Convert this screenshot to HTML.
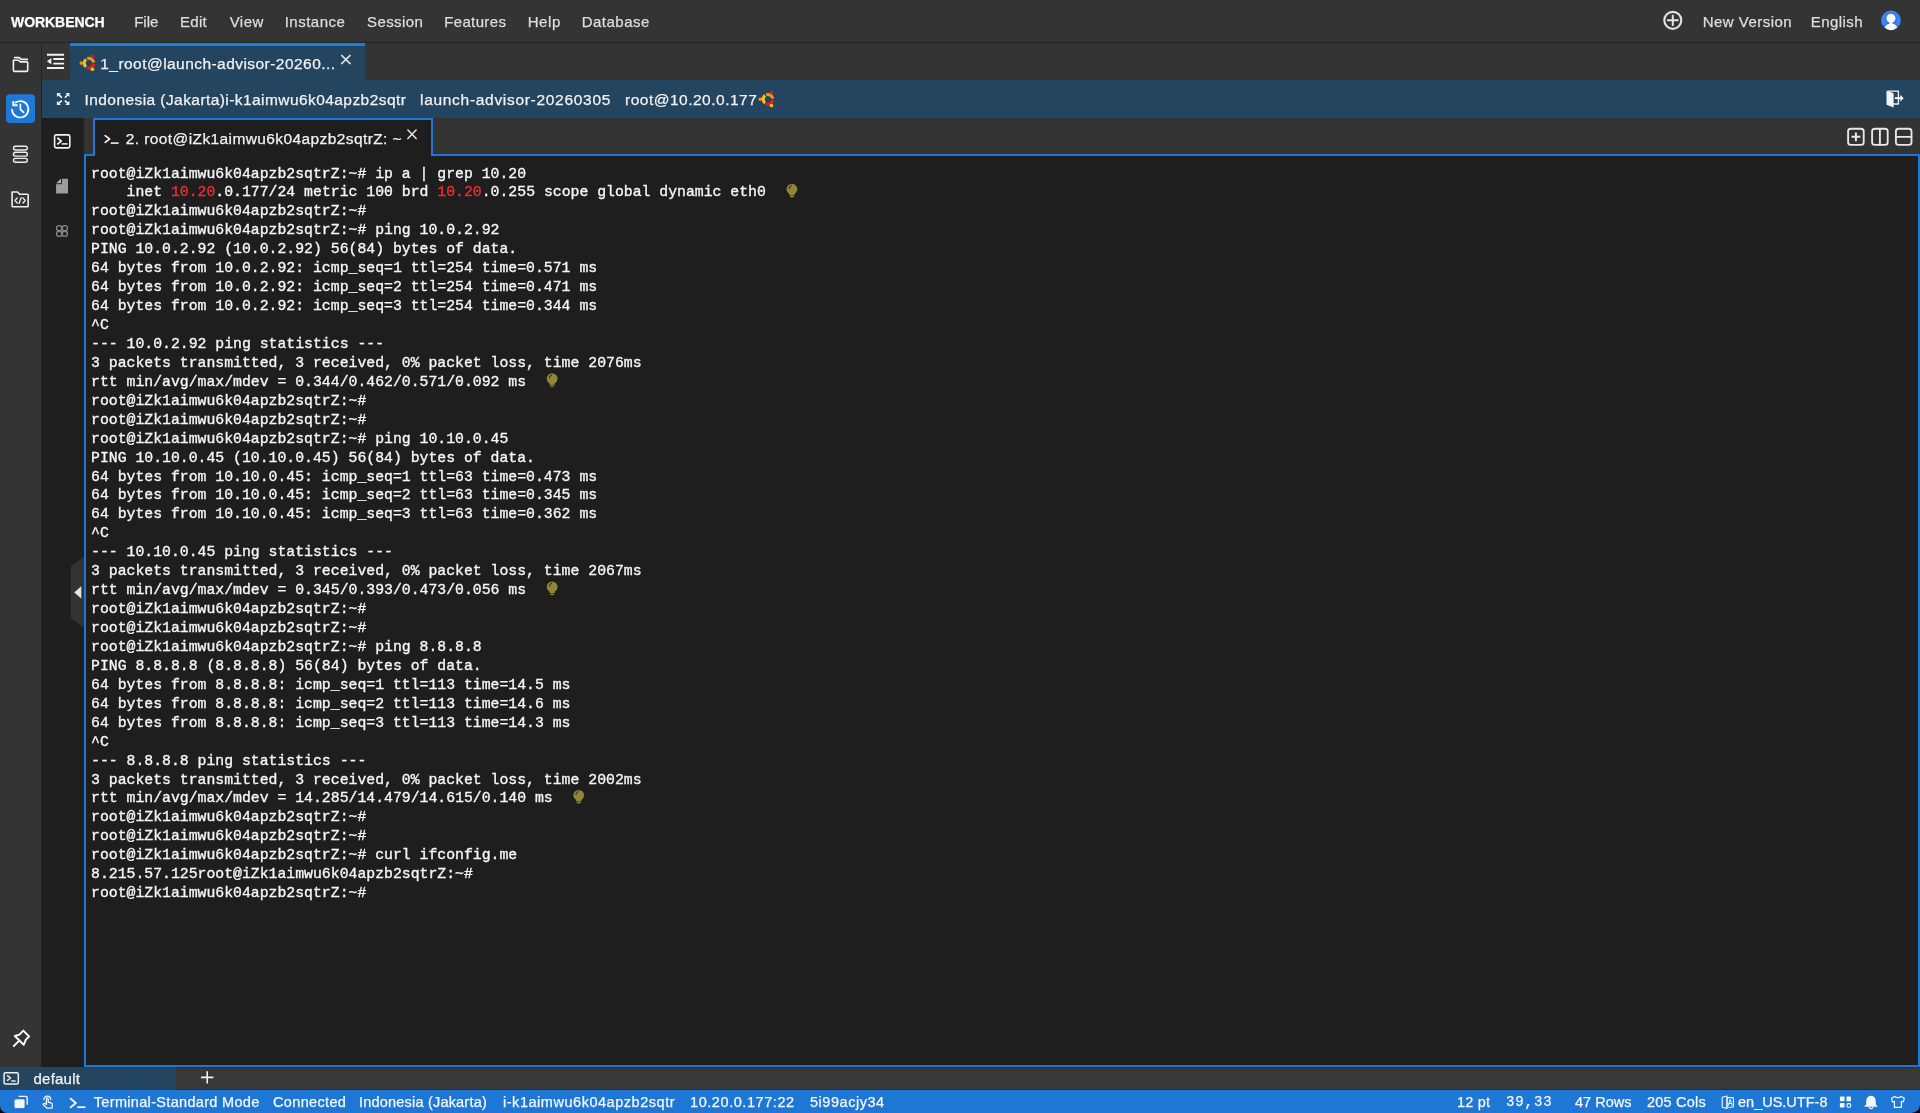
<!DOCTYPE html>
<html><head><meta charset="utf-8">
<style>
*{margin:0;padding:0;box-sizing:border-box}
html,body{width:1920px;height:1113px;overflow:hidden;background:#000}
body{position:relative;font-family:"Liberation Sans",sans-serif;color:#efefef}
.a{position:absolute}
#root{position:absolute;left:0;top:0;width:1920px;height:1113px;will-change:transform;overflow:hidden}
.t{position:absolute;white-space:pre;line-height:1;-webkit-text-stroke:0.25px currentColor}
#menubar{left:0;top:0;width:1920px;height:43px;background:#343434;border-bottom:1px solid #232323}
#side1{left:0;top:43px;width:42px;height:1024px;background:#343434;border-right:1px solid #252525}
#tabrow{left:42px;top:43px;width:1878px;height:37px;background:#343434}
#tab1{left:70px;top:43px;width:295px;height:37px;background:#24455f;border-top:3px solid #1a7fe0}
#info{left:42px;top:80px;width:1878px;height:38px;background:#24455f}
#side2{left:42px;top:118px;width:42px;height:949px;background:#1f1f1f}
#strip{left:84px;top:118px;width:1836px;height:37px;background:#333}
#term{left:84px;top:154px;width:1836px;height:913px;background:#1e1e1e;border:2px solid #1a78d8}
#ttab{left:93px;top:118px;width:340px;height:38px;background:#1e1e1e;border:2px solid #1a78d8;border-bottom:none}
#sess{left:0;top:1067px;width:1920px;height:23px;background:#383838;border-top:1px solid #2c2a22;border-bottom:1px solid #2e2c24}
#deftab{left:0;top:1066.5px;width:176px;height:23.5px;background:#24455f}
#status{left:0;top:1090px;width:1920px;height:23px;background:#1f77d5;border-radius:0 0 8.5px 7px}
.mono{font-family:"Liberation Mono",monospace}
#lines{left:91px;top:164.5px;font-size:14.8px;line-height:18.94px;color:#f6f6f6;white-space:pre;-webkit-text-stroke:0.35px #f6f6f6}
.r{-webkit-text-stroke:0.35px #e8302e}
.r{color:#e8302e}
.mi{top:13.6px;font-size:15px;color:#dedede}
.wt{color:#f2f2f2}
.st{top:1094.7px;font-size:14.5px;color:#f4f8fc}
</style></head><body><div id="root">
<div id="menubar" class="a"></div>
<div id="side1" class="a"></div>
<div id="tabrow" class="a"></div>
<div id="tab1" class="a"></div>
<div id="info" class="a"></div>
<div id="side2" class="a"></div>
<div id="strip" class="a"></div>
<div id="term" class="a"></div>
<div id="ttab" class="a"></div>
<div id="sess" class="a"></div>
<div id="deftab" class="a"></div>
<div id="status" class="a"></div>


<!-- ICONS -->
<svg class="a" style="left:0;top:0" width="1920" height="1113" viewBox="0 0 1920 1113" fill="none" stroke-linecap="round" stroke-linejoin="round">
 <!-- left sidebar: folder -->
 <g stroke="#f0f0f0" stroke-width="1.6">
  <path d="M14.5 57.6 H19.3 L21.3 59.4 H27.4"/>
  <path d="M13.4 60.2 V70.3 Q13.4 71.4 14.5 71.4 H26.6 Q27.7 71.4 27.7 70.3 V62.6 Q27.7 61.9 27 61.9 H20.3 L18.6 60.2 Z"/>
 </g>
 <!-- history button -->
 <rect x="6" y="94.3" width="29" height="28.7" rx="4" fill="#1f78d6"/>
 <g stroke="#fff" stroke-width="1.7">
  <path d="M15.6 102.5 A8.2 8.2 0 1 1 12 109.6"/>
  <path d="M13.3 101 V105.3 H17.6" stroke-linejoin="miter" stroke-linecap="butt" stroke-width="1.9"/>
  <path d="M20.4 104.3 V109.3 L23.6 112.4"/>
 </g>
 <!-- db list -->
 <g stroke="#eeeeee" stroke-width="1.4">
  <rect x="13.5" y="146.2" width="13.8" height="3.8" rx="1.9"/>
  <rect x="13.5" y="152.3" width="13.8" height="3.8" rx="1.9"/>
  <rect x="13.5" y="158.4" width="13.8" height="3.8" rx="1.9"/>
 </g>
 <g fill="#8a8a8a"><circle cx="15.9" cy="148.1" r="0.6"/><circle cx="15.9" cy="154.2" r="0.6"/><circle cx="15.9" cy="160.3" r="0.6"/></g>
 <!-- code folder -->
 <g stroke="#eeeeee" stroke-width="1.6">
  <path d="M12.1 192 H17.6 L19.6 194.3 H27.3 Q28.2 194.3 28.2 195.2 V206 Q28.2 206.8 27.3 206.8 H12.9 Q12.1 206.8 12.1 206 Z"/>
  <path d="M17.2 198 L15 200.5 L17.2 203 M23 198 L25.2 200.5 L23 203 M21.2 197.6 L19 203.4" stroke-width="1.3"/>
 </g>
 <!-- pin -->
 <g stroke="#fafafa" stroke-width="1.9">
  <path d="M23.3 1030.6 L29.1 1036.5 L25.9 1039.6 L23.7 1044.8 L14.8 1036 L19.4 1034.6 Z"/>
  <path d="M19.2 1040.6 L13.8 1046"/>
 </g>
 <!-- tab row list icon -->
 <g stroke="#f2f2f2" stroke-width="1.95" stroke-linecap="butt">
  <path d="M47 54.7 H64.1 M53.3 58.95 H64.1 M53.3 63.6 H64.1 M47 68 H64.1"/>
 </g>
 <path d="M47 61.2 L51.3 57.9 V64.5 Z" fill="#f2f2f2"/>
 <!-- tab close X -->
 <path d="M341.6 55.4 L350.1 63.6 M350.1 55.4 L341.6 63.6" stroke="#e6e6e6" stroke-width="1.5"/>
 <!-- info expand icon -->
 <g stroke="#f4f4f4" stroke-width="1.7" stroke-linecap="butt">
  <path d="M58.2 94.2 L61.8 97.7 M68.1 94.2 L64.9 97.7 M58.2 103.7 L61.8 100.6 M68.1 103.7 L64.9 100.6"/>
 </g>
 <g fill="#f4f4f4">
  <path d="M56.9 92.9 H60.9 L56.9 96.9 Z M69.4 92.9 H65.4 L69.4 96.9 Z M56.9 105 H60.9 L56.9 101 Z M69.4 105 H65.4 L69.4 101 Z"/>
 </g>
 <!-- exit icon -->
 <path d="M1888 91.1 H1898.4 V104 H1893" stroke="#f4f4f4" stroke-width="1.3" stroke-linecap="butt"/>
 <path d="M1886.5 90.5 L1893.6 93.2 V107.6 L1886.5 104.7 Z" fill="#f4f4f4"/>
 <path d="M1894.8 98.15 H1901" stroke="#f8f8f8" stroke-width="1.9" stroke-linecap="butt"/>
 <path d="M1900.4 94.8 L1903.7 98.15 L1900.4 101.5 Z" fill="#f8f8f8"/>
 <!-- side2 terminal icon -->
 <rect x="54.6" y="134.9" width="15.2" height="13" rx="1.6" stroke="#f2f2f2" stroke-width="1.6"/>
 <path d="M57.9 138.3 L61.3 141.1 L57.9 143.9" stroke="#f2f2f2" stroke-width="1.8"/>
 <path d="M61.7 143.9 H67.6" stroke="#f2f2f2" stroke-width="1.5" stroke-linecap="butt"/>
 <!-- side2 file icon -->
 <path d="M60.6 178.8 H68 V193.6 H56.1 V183.5 Z" fill="#9d9d9d"/>
 <path d="M56.7 183.3 L61.1 178.9 V183.3 Z" fill="#b0b0b0"/>
 <path d="M61.5 178.6 V183.7 H56.3" stroke="#161616" stroke-width="0.9" stroke-linecap="butt"/>
 <!-- side2 grid icon -->
 <g stroke="#858585" stroke-width="1.4">
  <rect x="56.6" y="225.6" width="5.2" height="5.2" rx="2.4"/><rect x="62.2" y="225.6" width="5.2" height="5.2" rx="2.4"/>
  <rect x="56.6" y="231.2" width="5.2" height="5.2" rx="2.4"/><rect x="62.2" y="231.2" width="5.2" height="5.2" rx="2.4"/>
 </g>
 <!-- terminal tab >_ icon and X -->
 <path d="M105.2 135.6 L109.6 139 L105.2 142.4" stroke="#efefef" stroke-width="1.7"/>
 <path d="M110.8 143.1 H118.6" stroke="#efefef" stroke-width="1.6" stroke-linecap="butt"/>
 <path d="M407.9 130.1 L416.1 138.6 M416.1 130.1 L407.9 138.6" stroke="#e6e6e6" stroke-width="1.5"/>
 <!-- split icons -->
 <g stroke="#e8e8e8" stroke-width="1.85">
  <rect x="1848.1" y="128.7" width="15.6" height="16.2" rx="2.6"/>
  <path d="M1855.9 132.4 V141.2 M1851.5 136.8 H1860.3" stroke-linecap="butt" stroke-width="2"/>
  <rect x="1872.1" y="128.7" width="15.6" height="16.2" rx="2.6"/>
  <path d="M1879.9 128.8 V144.8"/>
  <rect x="1895.9" y="128.7" width="15.6" height="16.2" rx="2.6"/>
  <path d="M1896 136.8 H1911.4"/>
 </g>
 <!-- plus circle -->
 <circle cx="1672.8" cy="20.35" r="8.5" stroke="#e2e2e2" stroke-width="2.1"/>
 <path d="M1672.8 14.8 V25.9 M1667.1 20.35 H1678.6" stroke="#e2e2e2" stroke-width="2" stroke-linecap="butt"/>
 <!-- avatar -->
 <circle cx="1890.95" cy="20.4" r="9.85" fill="#3d84f2"/>
 <circle cx="1890.95" cy="18.3" r="5.6" fill="#1f6fe8"/>
 <path d="M1883.5 27 Q1885.5 22.4 1890.95 22.4 Q1896.4 22.4 1898.4 27 Z" fill="#1f6fe8"/>
 <circle cx="1890.95" cy="18.3" r="4.6" fill="#f6f6f6"/>
 <rect x="1889.4" y="21.5" width="3.1" height="2.6" fill="#f0f0f0"/>
 <path d="M1884.7 27.6 Q1886 23.6 1890.95 23.6 Q1895.9 23.6 1897.2 27.6 Q1894.6 30.2 1890.95 30.2 Q1887.3 30.2 1884.7 27.6 Z" fill="#f8f8f8"/>
 <!-- session bar terminal icon -->
 <rect x="4.1" y="1072.7" width="14.2" height="11.4" rx="1.4" stroke="#f2f2f2" stroke-width="1.5"/>
 <path d="M7.5 1075.7 L10.5 1078 L7.5 1080.3" stroke="#f2f2f2" stroke-width="1.5"/>
 <path d="M11.2 1081 H15.6" stroke="#f2f2f2" stroke-width="1.4" stroke-linecap="butt"/>
 <!-- session plus -->
 <path d="M207.2 1071.2 V1083.6 M201 1077.4 H213.4" stroke="#f0f0f0" stroke-width="1.6" stroke-linecap="butt"/>
 <!-- status bar icons -->
 <path d="M18.6 1096.4 H25.8 Q27.2 1096.4 27.2 1097.8 V1104.8" stroke="#eef4fb" stroke-width="1.4" stroke-linecap="butt"/>
 <rect x="14.1" y="1098.9" width="10.9" height="9.6" rx="1.7" fill="#f2f6fb" stroke="#1f77d5" stroke-width="0.8"/>
 <g stroke="#f2f6fb" stroke-width="1.25">
  <path d="M43.9 1099.6 A3.4 3.4 0 1 1 50.7 1099.6"/>
  <path d="M46.4 1104.4 V1099 Q46.4 1097.9 47.3 1097.9 Q48.2 1097.9 48.2 1099 V1102.2 L50.9 1102.9 Q52.6 1103.4 52.4 1105.1 L52 1108 H46.8 L43.4 1104.8 Q42.7 1103.9 43.7 1103.5 Q44.7 1103.2 46.4 1104.4 Z"/>
 </g>
 <path d="M70.6 1098.6 L75.8 1103 L70.6 1107.4" stroke="#fff" stroke-width="1.8"/>
 <path d="M77.2 1107.2 H85.4" stroke="#fff" stroke-width="1.7" stroke-linecap="butt"/>
 <!-- translate icon -->
 <g stroke="#f0f6fc" stroke-width="1.1">
  <path d="M1722.2 1097.2 L1727 1096 V1108.4 L1722.2 1107.2 Z"/>
  <rect x="1727" y="1097.6" width="6.4" height="9.6" rx="0.6"/>
 </g>
 <path d="M1728.3 1105.4 L1730.2 1099.4 L1732.1 1105.4 M1729 1103.5 H1731.4" stroke="#f0f6fc" stroke-width="1"/>
 <!-- grid icon -->
 <g fill="#f4f8fc">
  <rect x="1839.9" y="1096.6" width="4.6" height="4.6" rx="0.8"/><rect x="1846.4" y="1096.6" width="4.6" height="4.6" rx="0.8"/>
  <rect x="1839.9" y="1103" width="4.6" height="4.6" rx="0.8"/>
 </g>
 <rect x="1847" y="1103.6" width="3.6" height="3.6" rx="1.2" stroke="#f4f8fc" stroke-width="1.1"/>
 <!-- bell -->
 <path d="M1871 1095.8 Q1875.6 1096.3 1875.8 1101.2 V1104.4 L1877.6 1106.2 V1106.8 H1864.4 V1106.2 L1866.2 1104.4 V1101.2 Q1866.4 1096.3 1871 1095.8 Z" fill="#f4f8fc"/>
 <path d="M1869.2 1107.6 Q1871 1109.6 1872.8 1107.6" stroke="#f4f8fc" stroke-width="1.2"/>
 <!-- shirt -->
 <path d="M1894.6 1096.5 L1891.5 1098.2 L1892.4 1101.8 L1894.4 1101.4 V1107.4 H1901.4 V1101.4 L1903.4 1101.8 L1904.3 1098.2 L1901.2 1096.5 Q1897.9 1098.8 1894.6 1096.5 Z" stroke="#f4f8fc" stroke-width="1.2"/>
 <!-- collapse handle -->
 <path d="M84 556.5 L71 566.5 V618 L84 628 Z" fill="#333"/>
 <path d="M74.2 592.4 L81.3 586.2 V598.6 Z" fill="#e4e4e4"/>
 <!-- ubuntu logos -->
 <g id="ub1">
  <g transform="translate(89 63.1)">
   <path d="M-1.8 -4.45 A4.8 4.8 0 0 1 4.75 -0.67" stroke="#f7960f" stroke-width="3" stroke-linecap="butt"/>
   <path d="M4.75 0.67 A4.8 4.8 0 0 1 -1.8 4.45" stroke="#ec1c1c" stroke-width="3" stroke-linecap="butt"/>
   <path d="M-2.96 3.78 A4.8 4.8 0 0 1 -2.96 -3.78" stroke="#fcc40a" stroke-width="3" stroke-linecap="butt"/>
   <circle cx="-7.7" cy="0" r="1.8" fill="#f7960f"/>
   <circle cx="3.4" cy="-6.6" r="1.8" fill="#ec1c1c"/>
   <circle cx="3.4" cy="6.2" r="1.8" fill="#fcc40a"/>
  </g>
 </g>
 <g transform="translate(679 36.2)"><use href="#ub1"/></g>
 <!-- bulbs -->
 <g id="bulb1">
  <circle cx="552.15" cy="378.6" r="5.4" fill="#8f8638"/>
  <path d="M549.6 382.2 H554.7 V384.9 H549.6 Z" fill="#8f8638"/>
  <path d="M550 385.5 H554.3 V386.2 Q552.15 387.6 550 386.2 Z" fill="#948a3a"/>
  <path d="M549.2 377.9 Q549.5 375.5 551.7 374.9" stroke="#24220f" stroke-width="1"/>
 </g>
 <use href="#bulb1" transform="translate(239.8 -189.4)"/>
 <use href="#bulb1" transform="translate(0 208.3)"/>
 <use href="#bulb1" transform="translate(26.6 416.7)"/>
</svg>
<!-- menu text -->
<div class="t" style="left:11px;top:14.7px;font-size:14px;font-weight:bold;color:#fff;letter-spacing:-0.05px">WORKBENCH</div>
<div class="t mi" style="left:134.2px;letter-spacing:0px">File</div>
<div class="t mi" style="left:180.0px;letter-spacing:0.3px">Edit</div>
<div class="t mi" style="left:229.7px;letter-spacing:0.45px">View</div>
<div class="t mi" style="left:284.7px;letter-spacing:0.5px">Instance</div>
<div class="t mi" style="left:367.0px;letter-spacing:0.4px">Session</div>
<div class="t mi" style="left:444.2px;letter-spacing:0.36px">Features</div>
<div class="t mi" style="left:527.7px;letter-spacing:0.6px">Help</div>
<div class="t mi" style="left:581.7px;letter-spacing:0.5px">Database</div>
<div class="t mi" style="left:1702.7px;letter-spacing:0.48px">New Version</div>
<div class="t mi" style="left:1810.7px;letter-spacing:0.45px">English</div>

<!-- tab & info text -->
<div class="t wt" style="left:100.3px;top:55.9px;font-size:15.5px;letter-spacing:0.45px">1_root@launch-advisor-20260...</div>
<div class="t wt" style="left:84.5px;top:91.9px;font-size:15.5px;letter-spacing:0.43px">Indonesia (Jakarta)i-k1aimwu6k04apzb2sqtr</div>
<div class="t wt" style="left:420px;top:91.9px;font-size:15.5px;letter-spacing:0.7px">launch-advisor-20260305</div>
<div class="t wt" style="left:625px;top:91.9px;font-size:15.5px;letter-spacing:0.5px">root@10.20.0.177</div>
<div class="t wt" style="left:125.8px;top:130.9px;font-size:15.5px;letter-spacing:0.4px">2. root@iZk1aimwu6k04apzb2sqtrZ: ~</div>
<div class="t wt" style="left:33.5px;top:1070.6px;font-size:15px;letter-spacing:0.23px">default</div>

<!-- status text -->
<div class="t st" style="left:93.8px;letter-spacing:0.32px">Terminal-Standard Mode</div>
<div class="t st" style="left:273px;letter-spacing:0.35px">Connected</div>
<div class="t st" style="left:359px;letter-spacing:0.2px">Indonesia (Jakarta)</div>
<div class="t st" style="left:503px;letter-spacing:0.53px">i-k1aimwu6k04apzb2sqtr</div>
<div class="t st" style="left:690px;letter-spacing:0.57px">10.20.0.177:22</div>
<div class="t st" style="left:810px;letter-spacing:0.53px">5i99acjy34</div>
<div class="t st" style="left:1457px;letter-spacing:0.2px">12 pt</div>
<div class="t st mono" style="left:1506px;font-size:14px;letter-spacing:0.9px">39,33</div>
<div class="t st" style="left:1575px;letter-spacing:0px">47 Rows</div>
<div class="t st" style="left:1647px;letter-spacing:0.2px">205 Cols</div>
<div class="t st" style="left:1738px;letter-spacing:0px">en_US.UTF-8</div>

<pre id="lines" class="a mono">root@iZk1aimwu6k04apzb2sqtrZ:~# ip a | grep 10.20
    inet <span class="r">10.20</span>.0.177/24 metric 100 brd <span class="r">10.20</span>.0.255 scope global dynamic eth0
root@iZk1aimwu6k04apzb2sqtrZ:~#
root@iZk1aimwu6k04apzb2sqtrZ:~# ping 10.0.2.92
PING 10.0.2.92 (10.0.2.92) 56(84) bytes of data.
64 bytes from 10.0.2.92: icmp_seq=1 ttl=254 time=0.571 ms
64 bytes from 10.0.2.92: icmp_seq=2 ttl=254 time=0.471 ms
64 bytes from 10.0.2.92: icmp_seq=3 ttl=254 time=0.344 ms
^C
--- 10.0.2.92 ping statistics ---
3 packets transmitted, 3 received, 0% packet loss, time 2076ms
rtt min/avg/max/mdev = 0.344/0.462/0.571/0.092 ms
root@iZk1aimwu6k04apzb2sqtrZ:~#
root@iZk1aimwu6k04apzb2sqtrZ:~#
root@iZk1aimwu6k04apzb2sqtrZ:~# ping 10.10.0.45
PING 10.10.0.45 (10.10.0.45) 56(84) bytes of data.
64 bytes from 10.10.0.45: icmp_seq=1 ttl=63 time=0.473 ms
64 bytes from 10.10.0.45: icmp_seq=2 ttl=63 time=0.345 ms
64 bytes from 10.10.0.45: icmp_seq=3 ttl=63 time=0.362 ms
^C
--- 10.10.0.45 ping statistics ---
3 packets transmitted, 3 received, 0% packet loss, time 2067ms
rtt min/avg/max/mdev = 0.345/0.393/0.473/0.056 ms
root@iZk1aimwu6k04apzb2sqtrZ:~#
root@iZk1aimwu6k04apzb2sqtrZ:~#
root@iZk1aimwu6k04apzb2sqtrZ:~# ping 8.8.8.8
PING 8.8.8.8 (8.8.8.8) 56(84) bytes of data.
64 bytes from 8.8.8.8: icmp_seq=1 ttl=113 time=14.5 ms
64 bytes from 8.8.8.8: icmp_seq=2 ttl=113 time=14.6 ms
64 bytes from 8.8.8.8: icmp_seq=3 ttl=113 time=14.3 ms
^C
--- 8.8.8.8 ping statistics ---
3 packets transmitted, 3 received, 0% packet loss, time 2002ms
rtt min/avg/max/mdev = 14.285/14.479/14.615/0.140 ms
root@iZk1aimwu6k04apzb2sqtrZ:~#
root@iZk1aimwu6k04apzb2sqtrZ:~#
root@iZk1aimwu6k04apzb2sqtrZ:~# curl ifconfig.me
8.215.57.125root@iZk1aimwu6k04apzb2sqtrZ:~#
root@iZk1aimwu6k04apzb2sqtrZ:~#</pre>
</div></body></html>
